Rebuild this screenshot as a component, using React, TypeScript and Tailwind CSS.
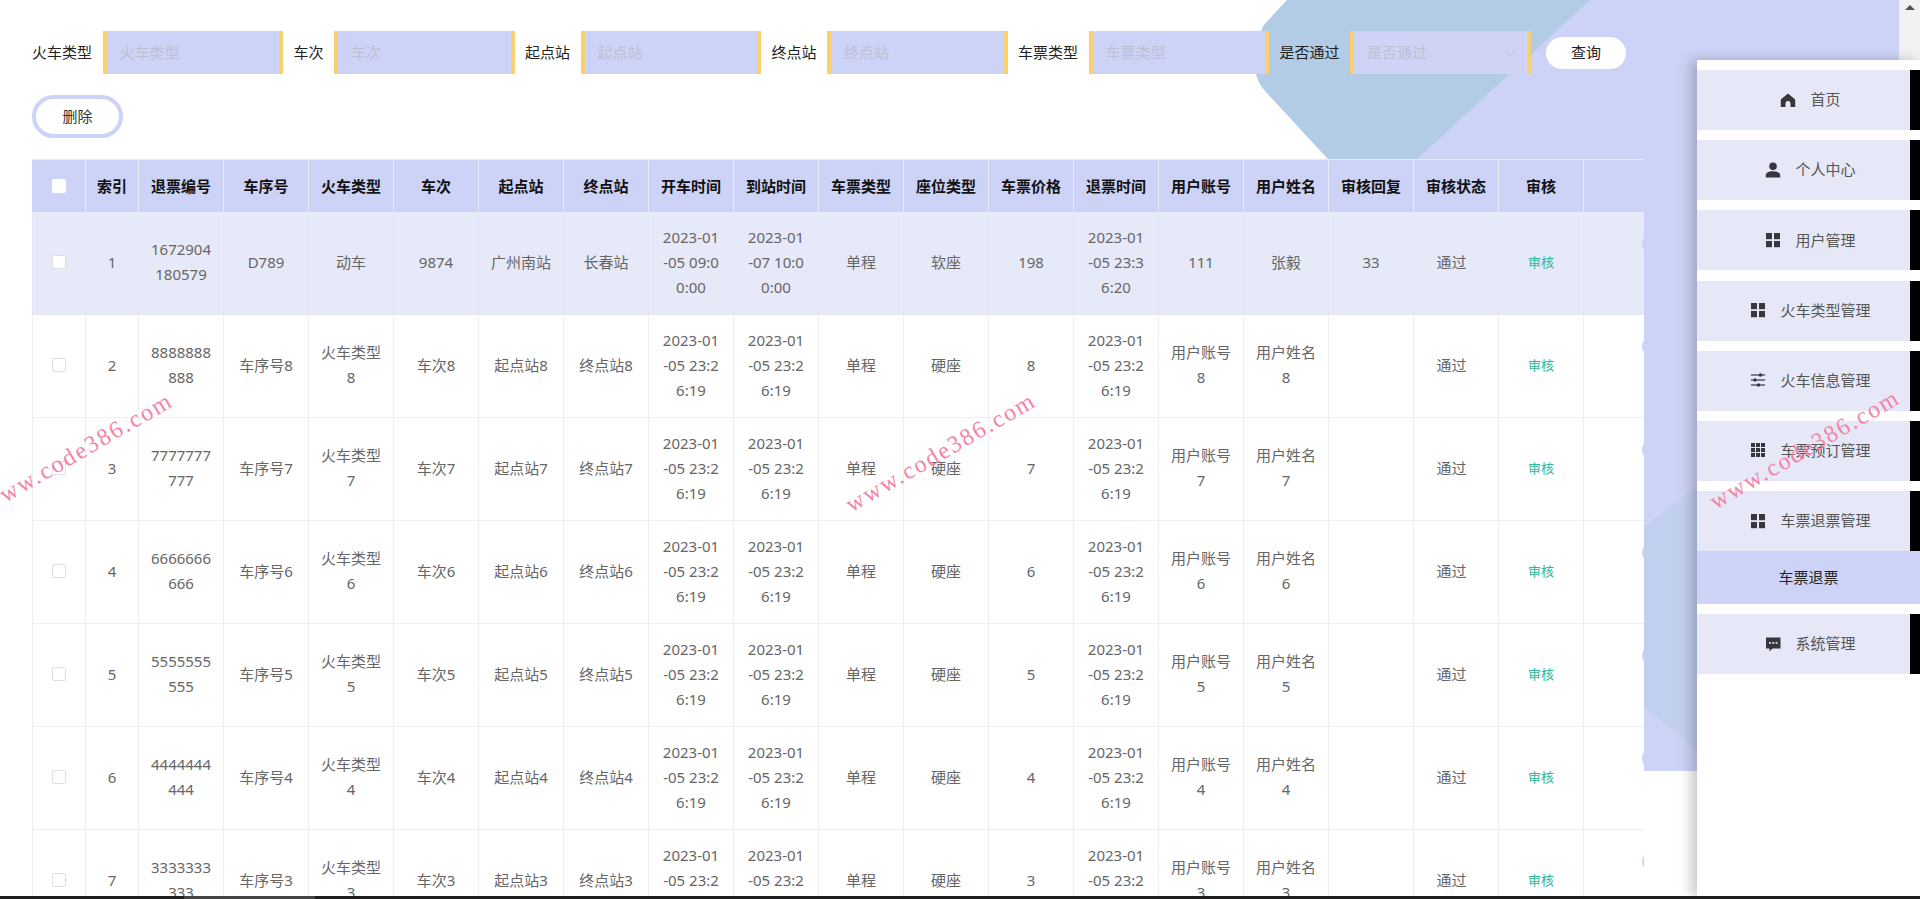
import React from "react";

const font = "font-['Noto_Sans','Noto_Sans_CJK_SC',sans-serif]";

const heads = ["索引", "退票编号", "车序号", "火车类型", "车次", "起点站", "终点站", "开车时间", "到站时间", "车票类型", "座位类型", "车票价格", "退票时间", "用户账号", "用户姓名", "审核回复", "审核状态", "审核"];

const rows: string[][] = [
  ["1", "1672904\n180579", "D789", "动车", "9874", "广州南站", "长春站", "2023-01\n-05 09:0\n0:00", "2023-01\n-07 10:0\n0:00", "单程", "软座", "198", "2023-01\n-05 23:3\n6:20", "111", "张毅", "33", "通过"],
  ...[8, 7, 6, 5, 4, 3].map((n, i) => {
    const time = "2023-01\n-05 23:2\n6:19";
    return [`${i + 2}`, `${String(n).repeat(7)}\n${String(n).repeat(3)}`, `车序号${n}`, `火车类型\n${n}`, `车次${n}`, `起点站${n}`, `终点站${n}`, time, time, "单程", "硬座", `${n}`, time, `用户账号\n${n}`, `用户姓名\n${n}`, "", "通过"];
  }),
];

const filters = [
  { label: "火车类型", w: "w-[60px]" },
  { label: "车次", w: "w-[30px]" },
  { label: "起点站", w: "w-[45px]" },
  { label: "终点站", w: "w-[45px]" },
  { label: "车票类型", w: "w-[60px]" },
];

const Svg = ({ children }: { children: React.ReactNode }) => (
  <svg viewBox="0 0 16 16" className="w-[16px] h-[16px] shrink-0" fill="#36363c">
    {children}
  </svg>
);

const HomeIcon = () => (
  <Svg>
    <path d="M8 1.500 15.200 7.600V15h-4.700v-3.600q0-2.300-2.500-2.300t-2.500 2.300V15H.8V7.600Z" />
  </Svg>
);
const UserIcon = () => (
  <Svg>
    <circle cx="8" cy="4.200" r="3.800" />
    <path d="M.8 15.500v-2.100C.8 10.600 4 9.300 8 9.300s7.200 1.300 7.200 4.100v2.100Z" />
  </Svg>
);
const GridIcon = () => (
  <Svg>
    <rect x="1" y="1" width="6" height="6.200" />
    <rect x="9" y="1" width="6" height="6.200" />
    <rect x="1" y="9" width="6" height="6.200" />
    <rect x="9" y="9" width="6" height="6.200" />
  </Svg>
);
const SlidersIcon = () => (
  <Svg>
    <rect x="1" y="2.400" width="14" height="1.200" />
    <rect x="1" y="7.400" width="14" height="1.200" />
    <rect x="1" y="12.400" width="14" height="1.200" />
    <circle cx="10.500" cy="3" r="1.700" />
    <circle cx="5" cy="8" r="1.700" />
    <circle cx="8.500" cy="13" r="1.700" />
  </Svg>
);
const AppsIcon = () => (
  <Svg>
    {[1, 6, 11].flatMap((y) =>
      [1, 6, 11].map((x) => <rect key={`${x}-${y}`} x={x} y={y} width="4" height="4" />)
    )}
  </Svg>
);
const ChatIcon = () => (
  <Svg>
    <path d="M1 1.500h14.500v11H7.500L4.500 15.500v-3H1Z" />
    <rect x="4" y="6" width="1.800" height="1.800" fill="#e6e8f7" />
    <rect x="7.300" y="6" width="1.800" height="1.800" fill="#e6e8f7" />
    <rect x="10.600" y="6" width="1.800" height="1.800" fill="#e6e8f7" />
  </Svg>
);

const menu = [
  { label: "首页", icon: <HomeIcon /> },
  { label: "个人中心", icon: <UserIcon /> },
  { label: "用户管理", icon: <GridIcon /> },
  { label: "火车类型管理", icon: <GridIcon /> },
  { label: "火车信息管理", icon: <SlidersIcon /> },
  { label: "车票预订管理", icon: <AppsIcon /> },
  { label: "车票退票管理", icon: <GridIcon /> },
];

const MenuItem = ({ label, icon }: { label: string; icon: React.ReactNode }) => (
  <div className="h-[60px] flex items-center justify-center gap-[14px] pl-[14px] pb-[1px] bg-[#e6e8f7] border-r-[10px] border-black text-[15px] text-[#555]">
    {icon}
    <span>{label}</span>
  </div>
);

const Watermark = ({ className }: { className: string }) => (
  <div className={`absolute z-30 -rotate-[30deg] whitespace-nowrap font-['Liberation_Serif',serif] text-[24px] tracking-[2px] text-[#f583a6] ${className}`}>
    www.code386.com
  </div>
);

const FilterInput = ({ label, w }: { label: string; w: string }) => (
  <>
    <span className={`${w} text-[15px] text-[#222] whitespace-nowrap`}>{label}</span>
    <div className="w-[180.5px] h-[43px] flex items-center pl-[13px] bg-[#cdd3f6] border-x-4 border-[#f9d06c] text-[15px] text-[#bcc0d2]">
      {label}
    </div>
  </>
);

export default function App() {
  return (
    <div className={`relative w-[1920px] h-[899px] overflow-hidden bg-white ${font}`}>
      {/* page background picture */}
      <svg className="absolute left-0 top-0" width="1920" height="899" viewBox="0 0 1920 899">
        <path d="M1287 0H1899V771H1644V300L1328 159 1267 93Q1259 85 1256 74 1250 50 1264 25Z" fill="#cdd3f6" />
        <path d="M1287 0H1590L1417 159H1328L1267 93Q1259 85 1256 74 1250 50 1264 25Z" fill="#b2cce6" />
        <path d="M1644 527 1697 487V750L1644 707Z" fill="#c2d0ef" />
      </svg>

      <div className="relative flex h-[896px]">
        <main className="w-[1697px] pl-[32px] pt-[31px]">
          <div className="flex items-center gap-[10.5px]">
            {filters.map((f) => (
              <FilterInput key={f.label} label={f.label} w={f.w} />
            ))}
            <span className="w-[60px] text-[15px] text-[#222] whitespace-nowrap">是否通过</span>
            <div className="w-[180.5px] h-[43px] flex items-center justify-between pl-[13px] pr-[11px] bg-[#cfd4f7] border-x-4 border-[#f9d06c] text-[15px] text-[#bcc0d2]">
              <span>是否通过</span>
              <svg viewBox="0 0 12 12" className="w-3 h-3" fill="none" stroke="#b9bdd3" strokeWidth="1">
                <path d="M1.500 4 6 8.500 10.500 4" />
              </svg>
            </div>
            <button className="ml-[5px] w-[80px] h-[32px] rounded-full bg-white text-[15px] text-[#222]">查询</button>
          </div>

          <button className="block mt-[21px] w-[91px] h-[43px] rounded-[22px] bg-white border-4 border-[#cdd3f6] text-[15px] text-[#333]">删除</button>

          <div className="mt-[21px] w-[1612px] overflow-hidden">
            <table className="table-fixed w-[1751px] border-separate border-spacing-0 text-center">
              <colgroup>
                <col className="w-[54px]" />
                <col className="w-[53px]" />
                {heads.slice(2).concat(heads.slice(0, 1)).map((h) => (
                  <col key={h} className="w-[85px]" />
                ))}
                <col className="w-[199px]" />
              </colgroup>
              <thead>
                <tr className="h-[53px] bg-[#cdd3f6] text-[15px] font-bold text-[#111]">
                  <th className="border-t border-r border-[#e9ebfa]">
                    <div className="mx-auto w-[14px] h-[14px] rounded-[2px] bg-white" />
                  </th>
                  {heads.map((h) => (
                    <th key={h} className="border-t border-r border-[#e9ebfa] font-bold">{h}</th>
                  ))}
                  <th className="border-t border-[#e9ebfa]" />
                </tr>
              </thead>
              <tbody>
                {rows.map((r, i) => {
                  const line = i === 0 ? "border-[#e3e6f6]" : "border-[#ebeef5]";
                  return (
                    <tr key={i} className={`h-[103px] text-[15px] leading-[25px] text-[#666] ${i === 0 ? "bg-[#e6e9f8]" : "bg-white"}`}>
                      <td className={`border-l border-r border-b pb-[2px] ${line}`}>
                        <div className={`mx-auto w-[14px] h-[14px] rounded-[2px] border border-[#dcdfe6] ${i === 0 ? "bg-white" : ""}`} />
                      </td>
                      {r.map((c, j) => (
                        <td key={j} className={`border-r border-b pb-[2px] whitespace-pre-line ${line} ${j === 16 ? "pr-[9px]" : ""}`}>{c}</td>
                      ))}
                      <td className={`border-r border-b pb-[2px] text-[13px] text-[#2fb79b] ${line}`}>审核</td>
                      <td className={`border-b align-top ${line}`}>
                        <div className="ml-[58px] mt-[21px] w-[80px] h-[21px] rounded-full bg-[#cdd3f6]" />
                      </td>
                    </tr>
                  );
                })}
              </tbody>
            </table>
          </div>
        </main>

        <aside className="relative z-20 w-[223px] mt-[60px] pt-[10px] bg-white shadow-[-6px_0_12px_rgba(0,0,0,0.22)]">
          <div className="flex flex-col gap-[10.2px]">
            {menu.map((m) => (
              <MenuItem key={m.label} label={m.label} icon={m.icon} />
            ))}
          </div>
          <div className="h-[53px] flex items-center justify-center bg-[#cdd3f6] text-[15px] text-[#222]">车票退票</div>
          <div className="mt-[10px]">
            <MenuItem label="系统管理" icon={<ChatIcon />} />
          </div>
        </aside>
      </div>

      {/* browser scrollbars */}
      <div className="absolute right-0 top-0 z-10 w-[21px] h-[60px] bg-[#f1f1f1] flex justify-center pt-[5px]">
        <div className="w-0 h-0 border-x-[5px] border-b-[5px] border-x-transparent border-b-[#505050]" />
      </div>
      <div className="relative z-40 h-[3px] pl-[184px] bg-[#1f1f1f]">
        <div className="w-[131px] h-[3px] bg-[#444]" />
      </div>

      <Watermark className="left-[-30px] top-[434px]" />
      <Watermark className="left-[833px] top-[434px]" />
      <Watermark className="left-[1697px] top-[431px]" />
    </div>
  );
}
